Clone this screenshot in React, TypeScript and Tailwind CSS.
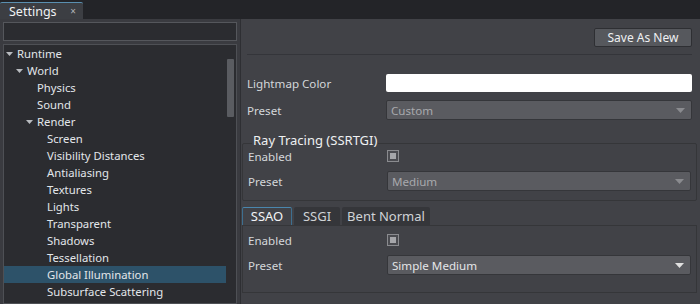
import React from "react";

const tree: { label: string; depth: number; arrow?: boolean; selected?: boolean }[] = [
  { label: "Runtime", depth: 0, arrow: true },
  { label: "World", depth: 1, arrow: true },
  { label: "Physics", depth: 2 },
  { label: "Sound", depth: 2 },
  { label: "Render", depth: 2, arrow: true },
  { label: "Screen", depth: 3 },
  { label: "Visibility Distances", depth: 3 },
  { label: "Antialiasing", depth: 3 },
  { label: "Textures", depth: 3 },
  { label: "Lights", depth: 3 },
  { label: "Transparent", depth: 3 },
  { label: "Shadows", depth: 3 },
  { label: "Tessellation", depth: 3 },
  { label: "Global Illumination", depth: 3, selected: true },
  { label: "Subsurface Scattering", depth: 3 },
];

const indent = ["pl-[13px]", "pl-[23px]", "pl-[33px]", "pl-[43px]"];
const arrowPos = ["left-[2px]", "left-[12px]", "left-[22px]", "left-[32px]"];

function Arrow({ color = "#c8c8c8", w = 9, h = 5 }: { color?: string; w?: number; h?: number }) {
  return (
    <svg width={w} height={h} viewBox={`0 0 ${w} ${h}`} className="block">
      <path d={`M0 0 H${w} L${w / 2} ${h} Z`} fill={color} />
    </svg>
  );
}

function Select({ text, disabled }: { text: string; disabled?: boolean }) {
  return (
    <div className="flex h-[20px] flex-1 items-center justify-between rounded-[2px] border border-[#35363a] bg-[#5a5b60] pl-[4px] pr-[6px]">
      <span className={disabled ? "text-[#a8a9ad]" : "text-[#e4e6e8]"}>{text}</span>
      <Arrow color={disabled ? "#8a8b8f" : "#e0e0e0"} />
    </div>
  );
}

function Checkbox() {
  return (
    <div className="flex h-[12px] w-[12px] items-center justify-center border border-[#8a8b8f] bg-[#4a4b50]">
      <div className="h-[6px] w-[6px] bg-[#a5a6aa]" />
    </div>
  );
}

function Row({ label, children, className = "" }: { label: string; children: React.ReactNode; className?: string }) {
  return (
    <div className={`flex items-center ${className}`}>
      <div className="w-[139px] shrink-0 text-[#d4d7da]">{label}</div>
      {children}
    </div>
  );
}

export default function App() {
  return (
    <div
      className="flex h-[304px] w-[700px] flex-col overflow-hidden bg-[#3a3b40] text-[11.6px] leading-[17px]"
      style={{ fontFamily: '"Noto Sans", "Open Sans", sans-serif' }}
    >
      {/* top tab bar */}
      <div className="flex h-[19px] shrink-0 items-end bg-[#232428]">
        <div className="flex h-[17px] w-[83px] items-center justify-between rounded-t-[2px] border-t border-[#5a8fb0] bg-[#3c3e43] pl-[9px] pr-[7px] text-[12.5px] text-[#f0f2f4]">
          <span>Settings</span>
          <span className="text-[10px] text-[#b0b2b6]">×</span>
        </div>
      </div>

      <div className="flex min-h-0 flex-1">
        {/* left panel */}
        <div className="flex w-[240px] shrink-0 flex-col gap-[3px] px-[3px] pt-[3px]">
          <div className="h-[19px] shrink-0 border border-[#55575c] bg-[#2b2c30]" />
          <div className="relative flex-1 border border-[#4e5055] bg-[#2b2c30] text-[11.3px]">
            {tree.map((t) => (
              <div
                key={t.label}
                className={`relative flex h-[17px] w-[222px] items-center ${indent[t.depth]} ${
                  t.selected ? "bg-[#2d5269]" : ""
                } text-[#e2e6ea]`}
              >
                {t.arrow && (
                  <span className={`absolute top-[7px] ${arrowPos[t.depth]}`}>
                    <Arrow color="#b8bbbf" w={7} h={4} />
                  </span>
                )}
                {t.label}
              </div>
            ))}
            <div className="absolute right-[2px] top-[14px] h-[58px] w-[7px] rounded-[1px] bg-[#5a5c61]" />
          </div>
        </div>

        {/* right panel */}
        <div className="flex flex-1 flex-col border-l border-[#2e2f33] bg-[#414247] pl-[1px] pr-[3px]">
          <div className="flex justify-end pr-[5px] pt-[9px]">
            <button className="h-[19px] w-[98px] rounded-[2px] border border-[#2e2f33] bg-[#56585d] text-[12px] leading-[16px] text-[#eef0f2]">
              Save As New
            </button>
          </div>
          <div className="ml-[5px] mr-[5px] mt-[7px] h-px bg-[#34353a]" />

          <div className="mt-[19px] flex flex-col gap-[8px] pl-[5px] pr-[5px]">
            <Row label="Lightmap Color">
              <div className="h-[18px] flex-1 rounded-[2px] bg-white" />
            </Row>
            <Row label="Preset">
              <Select text="Custom" disabled />
            </Row>
          </div>

          {/* group box */}
          <div className="relative mt-[23px] h-[58px] rounded-[2px] border border-[#353639] pl-[5px] pr-[5px] pt-[6px]">
            <div className="absolute left-[9px] top-[-11px] bg-[#414247] px-px text-[13px] leading-[15px] text-[#eef0f2]">
              Ray Tracing (SSRTGI)
            </div>
            <Row label="Enabled" className="h-[12px]">
              <Checkbox />
            </Row>
            <Row label="Preset" className="mt-[9px]">
              <Select text="Medium" disabled />
            </Row>
          </div>

          {/* tabs */}
          <div className="mt-[6px] flex h-[18px] items-end gap-[2px]">
            <div className="flex h-[18px] w-[50px] items-center justify-center rounded-t-[2px] border border-b-0 border-[#3e6f8f] border-t-[#4a86ad] bg-[#414247] text-[13px] text-[#f2f4f6]">
              SSAO
            </div>
            <div className="flex h-[18px] w-[46px] items-center justify-center rounded-t-[2px] bg-[#35363a] text-[13px] text-[#d0d3d6]">
              SSGI
            </div>
            <div className="flex h-[18px] w-[88px] items-center justify-center rounded-t-[2px] bg-[#35363a] text-[13px] text-[#d0d3d6]">
              Bent Normal
            </div>
          </div>
          <div className="h-[68px] border border-[#353639] pl-[5px] pr-[5px] pt-[8px]">
            <Row label="Enabled" className="h-[12px]">
              <Checkbox />
            </Row>
            <Row label="Preset" className="mt-[9px]">
              <Select text="Simple Medium" />
            </Row>
          </div>
        </div>
      </div>
    </div>
  );
}
